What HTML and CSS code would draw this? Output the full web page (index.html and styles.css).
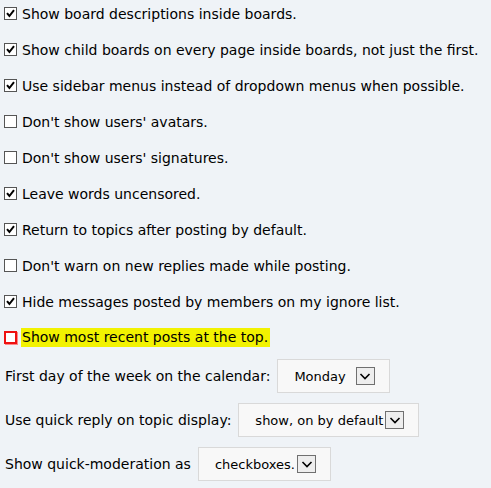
FILE: index.html
```html
<!DOCTYPE html>
<html lang="en">
<head>
<meta charset="UTF-8" />
<title>Look and Layout Preferences</title>
<link rel="stylesheet" href="styles.css">
</head>
<body>

<div class="prefs">
  <div class="opt"><span class="box checked"></span>Show board descriptions inside boards.</div>
  <div class="opt"><span class="box checked"></span>Show child boards on every page inside boards, not just the first.</div>
  <div class="opt"><span class="box checked"></span>Use sidebar menus instead of dropdown menus when possible.</div>
  <div class="opt"><span class="box"></span>Don't show users' avatars.</div>
  <div class="opt"><span class="box"></span>Don't show users' signatures.</div>
  <div class="opt"><span class="box checked"></span>Leave words uncensored.</div>
  <div class="opt"><span class="box checked"></span>Return to topics after posting by default.</div>
  <div class="opt"><span class="box"></span>Don't warn on new replies made while posting.</div>
  <div class="opt"><span class="box checked"></span>Hide messages posted by members on my ignore list.</div>
  <div class="opt"><span class="box flagged"></span><span class="mark">Show most recent posts at the top.</span></div>

  <div class="pick first-pick">
    <span>First day of the week on the calendar:</span>
    <div class="select">Monday<span class="arrow wide"></span></div>
  </div>
  <div class="pick">
    <span>Use quick reply on topic display:</span>
    <div class="select">show, on by default<span class="arrow"></span></div>
  </div>
  <div class="pick">
    <span>Show quick-moderation as</span>
    <div class="select">checkboxes.<span class="arrow"></span></div>
  </div>
</div>

</body>
</html>
```

FILE: styles.css
```css
body {
  margin: 0;
  background: #eff3f7;
  font-family: 'DejaVu Sans', Verdana, sans-serif;
  font-size: 14px;
  color: #000;
}

.prefs {
  padding: 4px 0 0 4px;
}

.opt {
  display: flex;
  align-items: center;
  height: 19px;
  margin-bottom: 17px;
}

.box {
  box-sizing: border-box;
  width: 13px;
  height: 13px;
  margin-right: 5px;
  border: 1px solid #555;
  background: #fff;
  flex: none;
}

.box.checked {
  background: #fff url("data:image/svg+xml;utf8,<svg xmlns='http://www.w3.org/2000/svg' width='11' height='11'><path d='M2 5.2 L4.4 8 L9 2.2' fill='none' stroke='black' stroke-width='2'/></svg>") no-repeat center;
}

.box.flagged {
  border: 2px solid #ee1111;
  box-shadow: 1px 1px 0 #f88;
}

.mark {
  background: #f2f200;
  padding: 0 2px 0 1px;
  margin-left: -1px;
  line-height: 19px;
}

.pick {
  display: flex;
  align-items: center;
  gap: 7px;
  padding-left: 1px;
  margin-bottom: 10px;
}

.first-pick {
  margin-top: -5px;
}

.select {
  display: flex;
  align-items: center;
  box-sizing: border-box;
  height: 34px;
  padding: 0 14px 0 16px;
  background: #f8f8f8;
  border: 1px solid #d9d9d9;
  font-size: 13px;
}

.arrow {
  box-sizing: border-box;
  width: 19px;
  height: 18px;
  margin-left: 2px;
  border: 1px solid #707070;
  background: #eee url("data:image/svg+xml;utf8,<svg xmlns='http://www.w3.org/2000/svg' width='16' height='16'><path d='M3.5 6 L8 10.5 L12.5 6' fill='none' stroke='black' stroke-width='1.6'/></svg>") no-repeat center;
}

.arrow.wide {
  margin-left: 10px;
}
```
